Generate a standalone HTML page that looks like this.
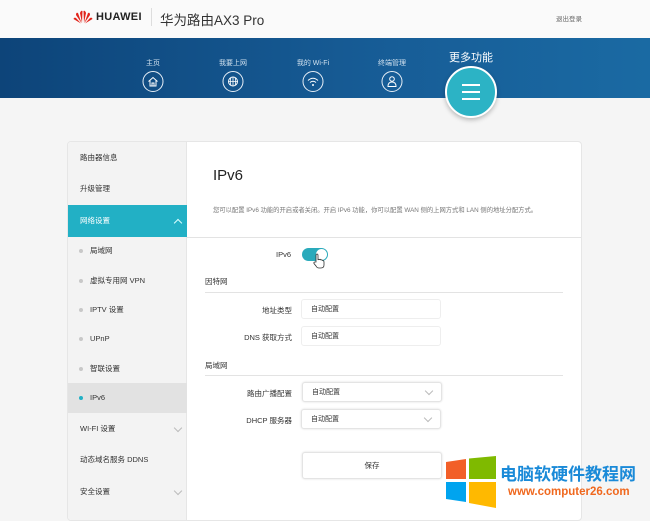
<!DOCTYPE html>
<html><head><meta charset="utf-8"><style>
*{margin:0;padding:0;box-sizing:border-box}
body{width:650px;height:513px;overflow:hidden;background:#f5f5f5;font-family:"Liberation Sans","Noto Sans CJK SC",sans-serif;color:#333;position:relative}
.a{position:absolute;white-space:nowrap}
.hdr{left:0;top:0;width:650px;height:38px;background:#fafafa}
.band{left:0;top:38px;width:650px;height:60px;background:linear-gradient(90deg,#0d4479,#175d97 60%,#1a6aa3)}
.nl{font-size:7px;color:#cfe0ee;transform:translateX(-50%)}
.ic{width:21px;height:21px;border:1.3px solid #e6eef6;border-radius:50%;transform:translateX(-50%)}
.panel{left:67px;top:141px;width:515px;height:380px;background:#fff;border:1px solid #e6e6e6;border-radius:4px;overflow:hidden}
.side{left:0;top:0;width:119px;height:380px;background:#f3f3f3;border-right:1px solid #e6e6e6}
.si{left:0;width:119px;height:30px;font-size:7.5px;color:#333;line-height:30px;padding-left:12px}
.sub{padding-left:22px}
.dot{position:absolute;left:11px;top:13px;width:4px;height:4px;border-radius:50%;background:#c8c8c8}
.chev{position:absolute;right:6px;top:11px;width:6px;height:6px;border-right:1px solid #bbb;border-bottom:1px solid #bbb;transform:rotate(45deg)}
.lab{font-size:7.5px;color:#333;text-align:right;width:110px}
.inp{width:140px;height:20px;border:1px solid #eee;border-radius:3px;font-size:7px;line-height:20px;padding-left:9px;color:#333;background:#fff}
.sel{box-shadow:0 0 2px #ddd;border-color:#e4e4e4}
.sel:after{content:"";position:absolute;right:9px;top:5px;width:5px;height:5px;border-right:1px solid #bbb;border-bottom:1px solid #bbb;transform:rotate(45deg)}
.sec{font-size:7.5px;color:#333}
.ln{height:1px;background:#e3e3e3}
</style></head><body>
<div class="a hdr"></div>
<svg class="a" style="left:73px;top:10px" width="20" height="14" viewBox="0 0 20 14"><g fill="#e1251b"><path d="M9 13 L7 3 Q8 0 9.5 1 Z"/><path d="M11 13 L13 3 Q12 0 10.5 1 Z"/><path d="M8.5 13 L3 5 Q3 2 5 3 Z"/><path d="M11.5 13 L17 5 Q17 2 15 3 Z"/><path d="M8 13.5 L0.5 9 Q1 7 3 8 Z"/><path d="M12 13.5 L19.5 9 Q19 7 17 8 Z"/></g></svg>
<div class="a" style="left:96px;top:11px;font-size:11px;font-weight:bold;color:#222;letter-spacing:.3px">HUAWEI</div>
<div class="a" style="left:151px;top:8px;width:1px;height:18px;background:#ddd"></div>
<div class="a" style="left:160px;top:9px;font-size:13.5px;color:#333">华为路由AX3 Pro</div>
<div class="a" style="left:556px;top:13px;font-size:6.5px;color:#666">退出登录</div>
<div class="a band"></div>
<div class="a nl" style="left:153px;top:58px">主页</div>
<div class="a nl" style="left:233px;top:58px">我要上网</div>
<div class="a nl" style="left:313px;top:58px">我的 Wi-Fi</div>
<div class="a nl" style="left:392px;top:58px">终端管理</div>
<div class="a ic" style="left:153px;top:71px"><svg width="19" height="19" viewBox="0 0 19 19" style="position:absolute;left:0;top:0"><path d="M5 9.5 L9.5 5.5 L14 9.5 M6.5 8.5 V14 H12.5 V8.5 M8.5 14 V11 H10.5 V14" fill="none" stroke="#fff" stroke-width="1"/></svg></div>
<div class="a ic" style="left:233px;top:71px"><svg width="19" height="19" viewBox="0 0 19 19" style="position:absolute;left:0;top:0"><circle cx="9.5" cy="9.5" r="4.5" fill="none" stroke="#fff"/><path d="M5 9.5H14M9.5 5V14M7.5 5.5Q6 9.5 7.5 13.5M11.5 5.5Q13 9.5 11.5 13.5" fill="none" stroke="#fff" stroke-width=".8"/></svg></div>
<div class="a ic" style="left:313px;top:71px"><svg width="19" height="19" viewBox="0 0 19 19" style="position:absolute;left:0;top:0"><path d="M4.5 8.5Q9.5 4 14.5 8.5M6.5 10.5Q9.5 8 12.5 10.5" fill="none" stroke="#fff"/><circle cx="9.5" cy="13" r="1" fill="#fff"/></svg></div>
<div class="a ic" style="left:392px;top:71px"><svg width="19" height="19" viewBox="0 0 19 19" style="position:absolute;left:0;top:0"><circle cx="9.5" cy="7" r="2.3" fill="none" stroke="#fff"/><path d="M5.5 14.5Q5.5 10 9.5 10Q13.5 10 13.5 14.5Z" fill="none" stroke="#fff"/></svg></div>
<div class="a" style="left:449px;top:49px;font-size:11px;color:#fff">更多功能</div>
<div class="a" style="left:445px;top:66px;width:52px;height:52px;border-radius:50%;background:#2cb3c5;border:2px solid #fff;box-shadow:0 2px 5px rgba(0,0,0,.25)"><div style="position:absolute;left:15px;top:16px;width:18px;height:1.5px;background:#fff;box-shadow:0 7px 0 #fff,0 14px 0 #fff"></div></div>
<div class="a panel">
<div class="a side">
<div class="a si" style="top:1px">路由器信息</div>
<div class="a si" style="top:32px">升级管理</div>
<div class="a si" style="top:63px;height:32px;line-height:32px;background:#22b0c5;color:#fff">网络设置<span style="position:absolute;right:6px;top:15px;width:6px;height:6px;border-left:1px solid #dff;border-top:1px solid #dff;transform:rotate(45deg)"></span></div>
<div class="a si sub" style="top:94px"><span class="dot"></span>局域网</div>
<div class="a si sub" style="top:124px"><span class="dot"></span>虚拟专用网 VPN</div>
<div class="a si sub" style="top:153px"><span class="dot"></span>IPTV 设置</div>
<div class="a si sub" style="top:182px"><span class="dot"></span>UPnP</div>
<div class="a si sub" style="top:212px"><span class="dot"></span>智联设置</div>
<div class="a si sub" style="top:241px;background:#e2e2e2"><span class="dot" style="background:#22b0c5"></span>IPv6</div>
<div class="a si" style="top:272px">WI-FI 设置<span class="chev"></span></div>
<div class="a si" style="top:303px">动态域名服务 DDNS</div>
<div class="a si" style="top:335px">安全设置<span class="chev"></span></div>
</div>
</div>
<div class="a" style="left:213px;top:167px;font-size:15px;color:#222">IPv6</div>
<div class="a" style="left:213px;top:205px;font-size:6.3px;color:#777">您可以配置 IPv6 功能的开启或者关闭。开启 IPv6 功能，你可以配置 WAN 侧的上网方式和 LAN 侧的地址分配方式。</div>
<div class="a ln" style="left:187px;top:237px;width:394px"></div>
<div class="a" style="left:276px;top:250px;font-size:7.5px">IPv6</div>
<div class="a" style="left:302px;top:248px;width:26px;height:13px;border-radius:7px;background:#2aaabb"><div style="position:absolute;right:1px;top:1px;width:11px;height:11px;border-radius:50%;background:#fff"></div></div>
<svg class="a" style="left:313px;top:253px" width="12" height="16" viewBox="0 0 12 16"><path d="M3 9 V2.5 Q3 1 4 1 Q5 1 5 2.5 V7 Q5.5 6 6.5 6.5 Q7.5 6 8 7 Q9 6.5 9.5 7.5 Q11 7.5 11 9 V12 Q11 15 8 15 H6 Q4 15 3 13 L1 10.5 Q0.5 9 2 9 Z" fill="#fff" stroke="#333" stroke-width=".8"/></svg>
<div class="a sec" style="left:205px;top:276px">因特网</div>
<div class="a ln" style="left:205px;top:292px;width:358px"></div>
<div class="a lab" style="left:182px;top:305px">地址类型</div>
<div class="a inp" style="left:301px;top:299px">自动配置</div>
<div class="a lab" style="left:182px;top:332px">DNS 获取方式</div>
<div class="a inp" style="left:301px;top:326px">自动配置</div>
<div class="a sec" style="left:205px;top:360px">局域网</div>
<div class="a ln" style="left:205px;top:375px;width:358px"></div>
<div class="a lab" style="left:182px;top:388px">路由广播配置</div>
<div class="a inp sel" style="left:302px;top:382px">自动配置</div>
<div class="a lab" style="left:182px;top:415px">DHCP 服务器</div>
<div class="a inp sel" style="left:301px;top:409px">自动配置</div>
<div class="a" style="left:302px;top:452px;width:140px;height:27px;border:1px solid #e4e4e4;border-radius:3px;background:#fff;font-size:7.5px;text-align:center;line-height:25px;box-shadow:0 0 2px #ddd">保存</div>
<svg class="a" style="left:446px;top:456px" width="52" height="52" viewBox="0 0 52 52"><path d="M0 6 L20 3 V23 H0Z" fill="#f25f28"/><path d="M23 2.5 L50 0 V23 H23Z" fill="#7fba00"/><path d="M0 26 H20 V46 L0 43Z" fill="#00a4ef"/><path d="M23 26 H50 V52 L23 47Z" fill="#ffb900"/></svg>
<div class="a" style="left:500px;top:460px;font-size:17px;font-weight:bold;color:#1a8ad8">电脑软硬件教程网</div>
<div class="a" style="left:508px;top:486px;font-size:11.5px;font-weight:bold;color:#f0681e">www.computer26.com</div>
</body></html>
